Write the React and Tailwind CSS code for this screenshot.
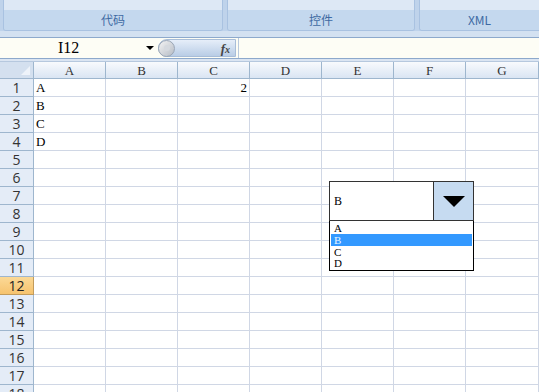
import React from 'react';

const cols = ['A', 'B', 'C', 'D', 'E', 'F', 'G'];
const rows = Array.from({ length: 18 }, (_, i) => i + 1);
const cellData = { '1A': 'A', '2A': 'B', '3A': 'C', '4A': 'D', '1C': '2' };

function RibbonGroup({ label, className }) {
  return (
    <div className={`flex flex-col h-[31px] rounded-b-[3px] border border-t-0 border-[#a9c2e1] overflow-hidden ${className}`}>
      <div className="h-[10px] bg-[#dde8f5]" />
      <div className="flex-1 flex items-center justify-center bg-[#c4d8ee] text-[12px] text-[#3e6aa3] leading-none">
        {label}
      </div>
    </div>
  );
}

export default function App() {
  return (
    <div
      className="relative w-[539px] h-[392px] overflow-hidden bg-white"
      style={{ fontFamily: '"Liberation Serif", "Noto Sans CJK SC", serif' }}
    >
      {/* Ribbon */}
      <div
        className="flex gap-[4px] pl-[3px] bg-[#bfd3eb] h-[31px]"
        style={{ fontFamily: '"Noto Sans CJK SC", "Liberation Sans", sans-serif' }}
      >
        <RibbonGroup label="代码" className="w-[220px]" />
        <RibbonGroup label="控件" className="w-[188px]" />
        <RibbonGroup label="XML" className="flex-1 rounded-br-none border-r-0" />
      </div>
      <div className="h-[6px] bg-[#d3e1f1]" />
      {/* Formula bar */}
      <div className="flex h-[22px] border-t border-b border-[#8da9cc] bg-[#fdfdf5]">
        <div className="relative w-[158px] flex items-center">
          <span className="ml-[58px] text-[16px] text-black leading-none">I12</span>
          <span className="absolute left-[146px] top-[8px] w-0 h-0 border-l-[4px] border-r-[4px] border-t-[4px] border-l-transparent border-r-transparent border-t-black" />
        </div>
        <div className="relative w-[78px] my-[1px] rounded-l-full rounded-r-[2px] bg-gradient-to-b from-[#e6eef9] to-[#b9cde6] border border-[#a8bdd8] flex items-center">
          <div className="w-[17px] h-[17px] rounded-full bg-gradient-to-br from-[#f4f4f4] to-[#b6bcc5] border border-[#9aa6b6] ml-[-1px] flex items-center justify-center">
            <div className="w-[6px] h-[6px] rounded-full bg-[#d5d9df]" />
          </div>
          <span className="ml-auto mr-[5px] text-[13px] italic font-bold text-[#444] leading-none">
            f<span className="text-[10px]">x</span>
          </span>
        </div>
        <div className="flex-1 ml-[2px] border-l border-[#b9c9dd]" />
      </div>
      <div className="h-[3px] bg-[#dbe5f2] border-b border-[#b6c8de]" />
      {/* Column header */}
      <div className="flex h-[17px]">
        <div className="relative w-[34px] bg-[#d4e0ef] border-r border-b border-[#9eb6ce]">
          <span className="absolute right-[3px] bottom-[3px] w-0 h-0 border-b-[9px] border-l-[9px] border-l-transparent border-b-[#eef3fa]" />
        </div>
        {cols.map((c, i) => (
          <div
            key={c}
            className={`${i === 6 ? 'w-[73px]' : 'w-[72px]'} flex items-center justify-center text-[13px] text-[#333] bg-gradient-to-b from-[#f8fafd] to-[#dae5f3] border-r border-b border-[#9eb6ce] leading-none`}
          >
            {c}
          </div>
        ))}
      </div>
      {/* Rows */}
      {rows.map((r) => (
        <div key={r} className="flex h-[18px]">
          <div
            className={`w-[34px] flex items-center justify-center text-[14px] border-r border-b leading-none ${
              r === 12
                ? 'bg-gradient-to-b from-[#fbd996] to-[#f6c36e] border-[#c29b5b] text-[#222]'
                : 'bg-[#e4ecf7] border-[#9eb6ce] text-[#333]'
            }`}
            style={{ fontFamily: '"Open Sans", "Liberation Sans", sans-serif' }}
          >
            {r}
          </div>
          {cols.map((c, i) => {
            const v = cellData[`${r}${c}`];
            return (
              <div
                key={c}
                className={`${i === 6 ? 'w-[73px]' : 'w-[72px]'} flex items-center px-[2px] text-[13px] text-black border-r border-b border-[#d0d7e5] leading-none ${
                  c === 'C' ? 'justify-end' : 'justify-start'
                }`}
              >
                {v}
              </div>
            );
          })}
        </div>
      ))}
      {/* Combo box control */}
      <div className="absolute left-[329px] top-[181px] w-[145px] flex flex-col text-[12px] leading-none">
        <div className="flex h-[40px] border border-[#333] bg-white">
          <div className="flex-1 flex items-center pl-[4px]">B</div>
          <div className="w-[40px] bg-[#c6dbf1] border-l border-[#333] flex items-center justify-center">
            <span className="w-0 h-0 border-l-[11px] border-r-[11px] border-t-[11px] border-l-transparent border-r-transparent border-t-black" />
          </div>
        </div>
        <div className="flex flex-col h-[50px] border border-t-0 border-black bg-white py-[1px] px-[1px] text-[11px]">
          <div className="h-[12px] leading-[12px] pl-[3px] overflow-hidden">A</div>
          <div className="h-[12px] leading-[12px] pl-[3px] overflow-hidden bg-[#3399ff] text-[#e8f6ff]">B</div>
          <div className="h-[12px] leading-[12px] pl-[3px] overflow-hidden">C</div>
          <div className="h-[11px] leading-[11px] pl-[3px] overflow-hidden">D</div>
        </div>
      </div>
    </div>
  );
}
